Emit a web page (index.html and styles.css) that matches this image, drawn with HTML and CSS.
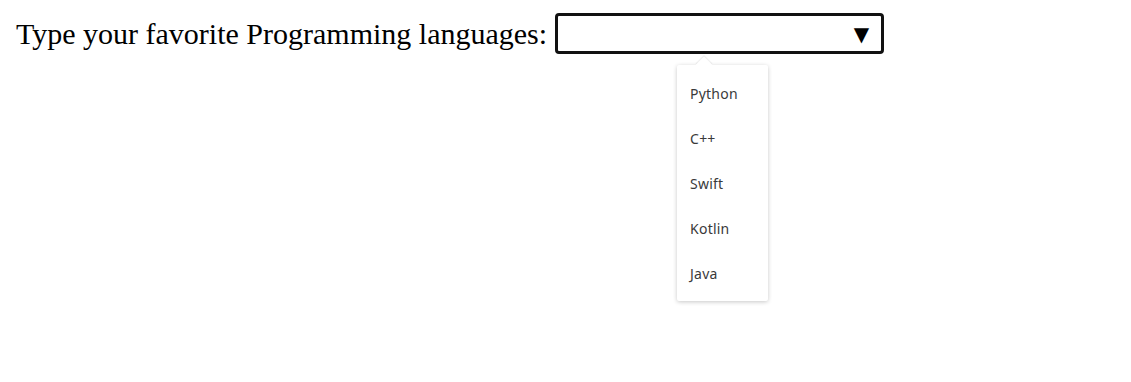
FILE: index.html
```html
<!DOCTYPE html>
<html lang="en">
<head>
    <meta charset="UTF-8">
    <title>Programming languages</title>
    <link rel="stylesheet" href="styles.css">
</head>
<body>

    <div class="field">
        <label class="field-label" for="lang-input">Type your favorite Programming languages:</label>
        <div class="combo-wrap">
            <div class="combo">
                <input type="text" id="lang-input" class="combo-input">
                <span class="combo-arrow">&#9660;</span>
            </div>
            <div class="combo-menu">
                <div class="combo-item">Python</div>
                <div class="combo-item">C++</div>
                <div class="combo-item">Swift</div>
                <div class="combo-item">Kotlin</div>
                <div class="combo-item">Java</div>
            </div>
        </div>
    </div>

</body>
</html>
```

FILE: styles.css
```css
body {
    margin: 8px;
    padding-bottom: 40px;
    font-family: "Liberation Serif", "Times New Roman", serif;
    background-color: #fff;
    color: #000;
}

.field {
    display: flex;
    align-items: flex-start;
    padding-top: 5px;
}

.field-label {
    font-size: 30px;
    line-height: 41px;
    padding-left: 8px;
    margin-right: 8px;
}

.combo-wrap {
    display: flex;
    flex-direction: column;
    align-items: flex-start;
}

.combo {
    width: 329px;
    height: 41px;
    box-sizing: border-box;
    border: 3px solid #111;
    border-radius: 4px;
    display: flex;
    align-items: center;
}

.combo-input {
    flex: 1;
    min-width: 0;
    border: none;
    outline: none;
    height: 100%;
    padding: 0 8px;
    font-size: 18px;
    background: transparent;
}

.combo-arrow {
    font-family: "DejaVu Sans", sans-serif;
    font-size: 20px;
    margin-right: 12px;
    line-height: 1;
}

.combo-menu {
    position: relative;
    width: 91px;
    margin: 11px 0 0 122px;
    padding: 6px 0 5px;
    background-color: #fff;
    border-radius: 2px;
    box-shadow: 0 1px 4px rgba(0, 0, 0, 0.22);
    font-family: "Noto Sans", "Open Sans", sans-serif;
    font-size: 14px;
    color: #3a3a3a;
}

/* small pointer above the menu */
.combo-menu::before {
    content: "";
    position: absolute;
    left: 21px;
    top: -6px;
    width: 12px;
    height: 12px;
    background-color: #fff;
    transform: rotate(45deg);
    box-shadow: -1px -1px 1px rgba(0, 0, 0, 0.07);
}

.combo-item {
    position: relative;
    height: 45px;
    line-height: 45px;
    padding-left: 13px;
    letter-spacing: 0.2px;
}
```
